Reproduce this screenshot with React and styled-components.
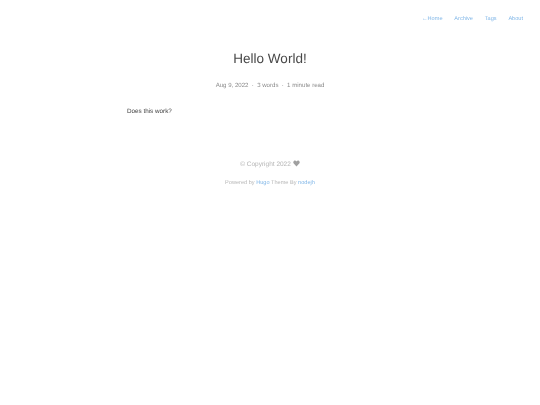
import React from 'react'
import styled, { createGlobalStyle } from 'styled-components'

const GlobalStyle = createGlobalStyle`
  html, body {
    margin: 0;
    padding: 0;
    background: #fff;
  }
  body {
    font-family: "Liberation Sans", Arial, sans-serif;
    color: #404040;
    text-rendering: geometricPrecision;
  }
  a {
    color: #83b8e8;
    text-decoration: none;
  }
`

const Page = styled.div`
  width: 540px;
  min-height: 405px;
  filter: blur(0.3px);
`

const Header = styled.header`
  display: flex;
  justify-content: flex-end;
  gap: 11.8px;
  padding: 14.5px 17px 0 0;
  font-size: 5.6px;
  line-height: 8px;
`

const Main = styled.main`
  width: 286px;
  margin: 0 auto;
  padding-top: 27.5px;
`

const Title = styled.h1`
  margin: 0;
  font-size: 13.5px;
  line-height: 18px;
  font-weight: 400;
  text-align: center;
  color: #484848;
`

const Meta = styled.div`
  display: flex;
  justify-content: center;
  gap: 3.3px;
  margin-top: 14px;
  font-size: 6.1px;
  line-height: 8px;
  color: #8c8c8c;
`

const Body = styled.p`
  margin: 17px 0 0;
  font-size: 6.3px;
  line-height: 10px;
  color: #404040;
`

const Footer = styled.footer`
  margin-top: 43px;
  text-align: center;
`

const Copyright = styled.div`
  display: flex;
  justify-content: center;
  align-items: center;
  gap: 2px;
  font-size: 6.5px;
  line-height: 10px;
  color: #b4b4b4;
  svg {
    margin-top: -3.5px;
  }
`

const Powered = styled.div`
  margin-top: 9px;
  font-size: 5.6px;
  line-height: 8px;
  color: #b8b8b8;
`

const Heart = () => (
  <svg width="7" height="7" viewBox="0 0 24 24" fill="#a0a0a0" aria-hidden="true">
    <path d="M12 22 2.6 12.2C-.2 9.2.6 4.2 4 2.600c2.900-1.300 6.200-.2 8 2.600 1.800-2.800 5.100-3.900 8-2.600 3.400 1.600 4.200 6.600 1.400 9.600z" />
  </svg>
)

const App = () => {
  return (
    <Page>
      <GlobalStyle />
      <Header>
        <a href="#home">←Home</a>
        <a href="#archive">Archive</a>
        <a href="#tags">Tags</a>
        <a href="#about">About</a>
      </Header>
      <Main>
        <Title>Hello World!</Title>
        <Meta>
          <span>Aug 9, 2022</span>
          <span>·</span>
          <span>3 words</span>
          <span>·</span>
          <span>1 minute read</span>
        </Meta>
        <Body>Does this work?</Body>
        <Footer>
          <Copyright>© Copyright 2022 <Heart /></Copyright>
          <Powered>Powered by <a href="#hugo">Hugo</a> Theme By <a href="#nodejh">nodejh</a></Powered>
        </Footer>
      </Main>
    </Page>
  )
}

export default App
